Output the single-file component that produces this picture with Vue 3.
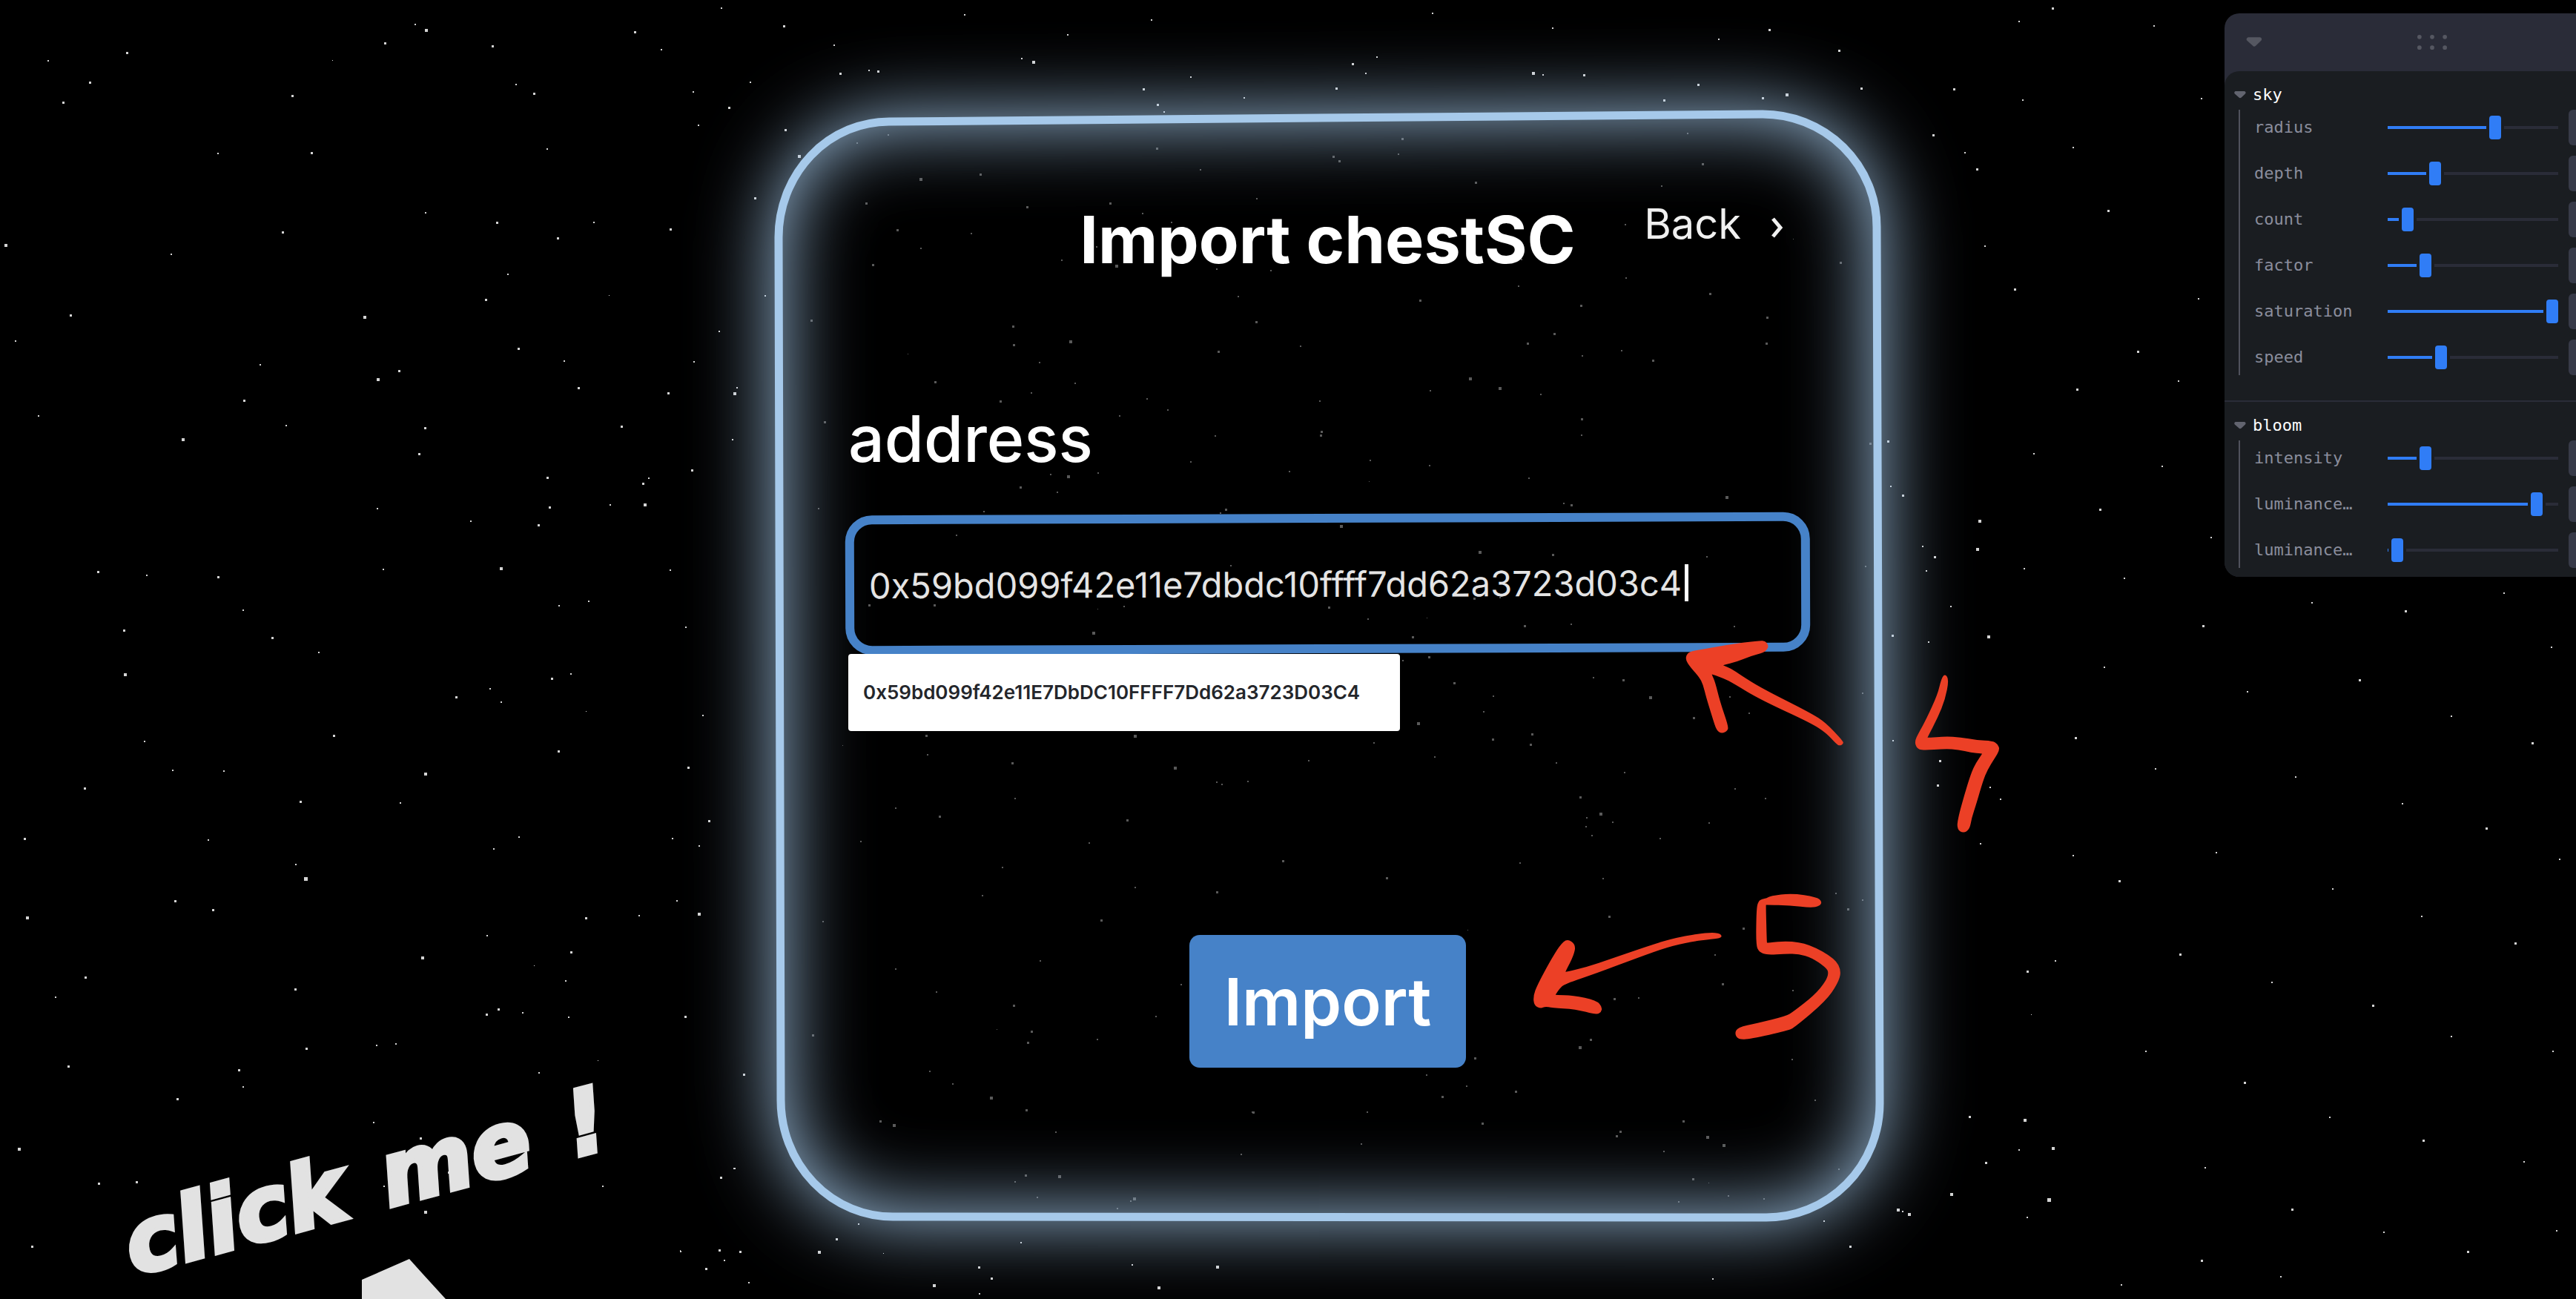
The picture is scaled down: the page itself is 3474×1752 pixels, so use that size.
<script setup>
import { ref, reactive } from 'vue'

const address = ref('0x59bd099f42e11e7dbdc10ffff7dd62a3723d03c4')
const suggestion = '0x59bd099f42e11E7DbDC10FFFF7Dd62a3723D03C4'

const folders = reactive([
  {
    name: 'sky',
    controls: [
      { id: 'radius', label: 'radius', value: 137 },
      { id: 'depth', label: 'depth', value: 56 },
      { id: 'count', label: 'count', value: 19 },
      { id: 'factor', label: 'factor', value: 43 },
      { id: 'saturation', label: 'saturation', value: 214 },
      { id: 'speed', label: 'speed', value: 64 },
    ],
  },
  {
    name: 'bloom',
    controls: [
      { id: 'intensity', label: 'intensity', value: 43 },
      { id: 'luminance-threshold', label: 'luminance…', value: 193 },
      { id: 'luminance-smoothing', label: 'luminance…', value: 5 },
    ],
  },
])

// Star sectors: origin, unit scale and a list of "x y size" in sector units.
const sectors = [
  {
    at: [0, 0], unit: [1.742, 2.24],
    stars: '114 183 2,298 158 3,210 249 3,148 310 3,513 463 2,732 461 3,687 288 3,782 183 1,904 129 3,976 74 2,1000 90 4,1157 140 3,1212 255 2,1255 283 3,1491 97 3,1553 150 2,1286 450 2,1000 643 2,1167 671 3,1395 673 2,1310 718 3,664 702 3,402 768 2,13 740 4,1193 829 2,1141 904 3,1432 894 1,855 957 4,165 953 3,36 1030 2,611 1102 2,887 1145 4,938 1119 3,1218 1053 3,1325 1090 2,1358 1172 3,573 1209 3,90 1256 2,428 1327 4,673 1286 2,999 1292 3,1459 1288 3,984 1370 3,1286 1442 3,1524 1445 2,1511 1461 3,1513 1523 4,1434 1526 2,1290 1532 3,887 1537 2',
  },
  {
    at: [0, 700], unit: [1.568, 1.4905],
    stars: '207 106 3,310 114 2,461 116 3,514 183 2,262 223 3,264 312 4,576 238 3,674 268 2,811 102 2,1058 98 4,995 5 2,1139 12 3,1183 174 2,1245 165 2,1417 103 2,1450 218 2,1167 321 3,1207 312 2,965 358 3,1037 342 2,1060 368 2,1240 387 1,1181 466 3,1487 395 2,1455 500 3,706 435 3,305 447 2,365 506 2,473 507 2,178 541 3,899 511 4,635 568 3,847 571 2,1499 606 3,1422 643 2,1478 658 2,1097 639 2,1045 664 2,51 643 3,440 645 2,625 694 2,645 722 5,370 767 3,450 785 3,56 800 4,1431 767 2,1351 797 2,1238 802 3,1477 793 4,1030 837 2,1208 870 3,892 881 4,1130 899 1,1196 928 2,181 921 3,117 961 2,624 945 3,1054 985 3,1029 996 3,1105 992 2,1202 1001 2,1449 1000 3,837 1055 2,796 1058 2,647 1064 3,1265 1090 1,1140 1114 2,145 1100 3,505 1108 3,514 1142 2,374 1165 3,790 1213 2,889 1245 3,39 1265 4,209 1335 3,288 1332 3,812 1341 2,1274 1341 2,911 1363 2,898 1392 4,949 1313 3,1553 1305 2,1524 1323 3,68 1462 3,1439 1472 2',
  },
  {
    at: [900, 60], unit: [1.823, 2.613],
    stars: '410 2 2,871 49 2,899 61 4,425 103 3,496 92 2,518 93 3,204 132 2,64 168 2,152 221 3,76 286 2,290 300 3,323 392 4,216 540 3,8 651 3,240 885 2,128 1011 2,66 1118 2,171 1211 2,164 1228 4,2 1227 3,160 1392 2,60 1501 3,1287 116 2,1170 156 3,1205 211 3,1221 237 2,1418 189 2',
  },
  {
    at: [1760, 60], unit: [1.823, 2.613],
    stars: '117 68 3,177 45 2,150 101 2,77 153 3,559 99 4,585 107 2,685 106 3,967 142 3,883 195 3,1184 176 4,1124 189 3,1178 243 2,1313 21 3,1367 153 3,1544 320 3,1433 1398 3,1440 1557 2',
  },
  {
    at: [1960, 660], unit: [1.96, 3],
    stars: '1187 24 3,1389 125 4,1241 231 2,1383 240 4,1273 274 3,1251 331 2,1315 474 2,1161 590 3,1413 593 4,1256 619 2,1162 1017 2,1286 1099 3,1279 1197 3,1420 1206 2,1446 1255 2,1394 1434 2',
  },
  {
    at: [900, 1350], unit: [1.823, 3],
    stars: '44 64 2,187 296 3,166 678 2,131 713 3,470 903 2,416 964 3,372 1015 4,128 1008 3,178 1015 3,32 1012 1,140 1050 2,94 1083 3,200 1140 2,532 1022 1,654 1148 4,766 1078 3,797 1123 3,767 1185 2,870 979 2,1143 1068 2,1351 1074 4,1207 1158 4',
  },
  {
    at: [2200, 1300], unit: [2.613, 3],
    stars: '1396 31 3,1410 207 1,1192 618 3,1385 631 4,1483 743 4,1366 753 2,1248 805 3,1125 930 4,1469 951 5,937 994 4,956 1001 2,977 1011 4,803 835 2,680 1041 2,770 1142 3,287 1275 2',
  },
  {
    at: [0, 0], unit: [0.4513, 0.4513],
    stars: '439 5 2,587 9 2,477 16 3,650 21 2,701 12 2,872 8 2,945 17 2,1046 24 2,1077 18 3,1189 54 3,1196 93 2,1203 103 3,1229 13 2,1249 5 3,1311 16 2,1231 61 2,1262 90 2,1340 60 2,1208 150 2,1283 128 3,1226 176 3,1338 182 2,1301 214 3,1326 232 2,1264 237 3,1238 276 2,1316 284 2,1278 310 3,1346 327 2,1232 346 2,1293 352 2,1341 381 3,1407 367 2,1464 372 3,1524 361 2,1553 394 2,1281 406 2,1368 421 2,1436 414 3,1492 436 2,1541 452 3,1263 449 3,1312 468 2,1397 473 2,1462 489 2,1513 504 3,1558 523 2,1262 521 2,1290 536 3,1349 519 2,1420 541 2,1474 558 2,1531 574 3,1327 581 3,1383 598 2,1444 612 3,1492 631 2,1554 640 2,1251 585 2,1306 640 2,1366 659 3,1418 680 2,1475 694 3,1536 707 2,1342 711 2,1395 736 3,1451 750 2,1502 762 3,1556 749 2,1340 767 3,1291 782 2,1234 741 2,1388 777 2',
  },
]

const dimSectors = [
  {
    at: [900, 60], unit: [1.823, 2.613],
    stars: '543 320 2,467 347 2,1204 366 3,1311 442 2,621 474 4,770 458 3,489 558 3,884 571 3,1088 558 3,1169 595 2,566 653 3,748 666 2,1450 544 2,1240 627 2,623 718 2,1055 713 2,505 775 3,969 761 2,1103 779 4,1350 791 2,1484 797 2,1404 888 2,354 971 3,849 993 3,851 1058 3,989 1045 4,1448 976 3,1354 1081 3,593 1093 1,916 1120 2,658 1188 3,1003 1194 2,895 1227 2,819 1257 3,1179 1249 2,1231 1287 2,1112 1309 2,387 1331 3,1348 1379 2,1287 1471 2,985 1520 4,942 1516 2,1059 1510 2,1530 1505 2,868 1559 3,1556 1063 2',
  },
  {
    at: [1760, 60], unit: [1.823, 2.613],
    stars: '239 331 3,229 388 2,70 394 3,83 409 3,420 486 3,941 314 2,978 420 3,877 500 2,787 636 2,1202 686 1,533 757 2,1317 768 3,789 824 2,525 852 2,995 879 3,282 901 3,678 919 3,1135 962 3,612 1020 3,547 1054 3,1133 1053 3,778 1080 2,682 1097 2,855 1113 3,404 1176 4,478 1209 4,308 1220 2,580 1234 2,36 1256 2,680 1319 3,680 1378 2,41 1363 3,38 1376 3,1389 1407 3,160 1466 2,306 1485 2,550 1528 2,159 1541 1',
  },
  {
    at: [1100, 660], unit: [1.823, 3],
    stars: '594 12 2,8 78 2,414 91 2,1008 80 3,996 95 2,346 186 2,1291 148 4,1020 309 2,132 467 3,291 469 3,759 474 2,695 486 1,1261 478 3,1358 524 2,1504 522 1,682 580 4,1468 597 3,1507 679 3,1444 693 2,1480 944 4,271 997 3,784 996 4,1372 1026 2,275 1074 2,1522 1084 2,484 1107 3,1213 1098 2,882 1126 4,68 1039 1,987 1184 2,1063 1181 2,999 1194 2',
  },
  {
    at: [1960, 660], unit: [1.96, 3],
    stars: '722 30 4,292 57 2,312 64 3,69 252 4,262 265 3,671 272 2,1089 311 2,55 442 3,124 437 2,189 553 3,311 546 2,743 555 2,2 784 3,105 837 2,449 772 3,370 762 2,520 841 4,731 839 2,80 900 2,636 925 3,782 906 2,1081 825 2,208 991 3,103 1010 3,203 1033 3,272 1107 2,453 1145 2,745 1211 2,335 1246 3,825 1251 2,388 1310 4,352 1330 2,351 1364 2,421 1348 2,677 1350 2,366 1401 2,546 1413 2',
  },
  {
    at: [1560, 1160], unit: [1.568, 3],
    stars: '267 3 3,769 11 2,486 71 3,944 76 2,127 129 3,957 228 3,658 285 1,1241 275 3,1180 385 2,1197 502 3,51 503 2,968 561 3,1019 558 2,1345 527 2,917 727 3,893 757 4,673 801 3,1343 807 2,571 871 2,655 916 2,759 935 3,603 956 3,203 1021 2,446 1020 2,1392 971 2,1114 1055 3,689 1064 3,980 1098 3,972 1116 3,1164 1120 4,1198 1152 4,432 1149 2,1072 1179 2,1437 135 2,1492 161 2,1461 198 3',
  },
  {
    at: [900, 1350], unit: [1.823, 3],
    stars: '852 17 3,811 118 1,896 122 3,886 168 3,1057 156 2,1201 63 2,358 137 3,646 285 2,701 336 2,794 390 4,883 441 3,524 485 3,556 502 4,955 531 2,1440 451 3,1411 621 2,881 705 3,963 707 4,855 732 2,909 795 2,1146 797 4,1139 809 2,1107 840 2',
  },
  {
    at: [2200, 1300], unit: [2.613, 3],
    stars: '184 635 3,268 700 3,324 732 3,115 759 2,216 870 3,275 888 1,342 939 2,167 962 2,467 951 2,648 551 2,567 387 2,732 831 2',
  },
  {
    at: [0, 0], unit: [0.4513, 0.4513],
    stars: '545 492 2,572 497 3,663 513 2,610 528 2,598 545 2,670 560 3,524 512 2,501 561 2,545 590 2,633 585 2,691 540 2,570 604 2,618 486 2,686 499 3',
  },
]

function starDots(list) {
  return list.flatMap(({ at, unit, stars }) =>
    stars.split(',').map((star) => {
      const [x, y, size] = star.split(' ').map(Number)
      return { x: Math.round(at[0] + x / unit[0]), y: Math.round(at[1] + y / unit[1]), size }
    }),
  )
}

const brightStars = starDots(sectors)
const dimStars = starDots(dimSectors)

// Turns a pen outline into a closed curve that runs through the segment midpoints.
function inkPath(points, at, unit) {
  const p = points.split(' ').map((pair) => {
    const [x, y] = pair.split(',').map(Number)
    return [at[0] + x / unit[0], at[1] + y / unit[1]]
  })
  const mid = (a, b) => [(a[0] + b[0]) / 2, (a[1] + b[1]) / 2].map((n) => n.toFixed(1)).join(' ')
  const start = mid(p[p.length - 1], p[0])
  const body = p.map((pt, i) => `Q${pt.map((n) => n.toFixed(1)).join(' ')} ${mid(pt, p[(i + 1) % p.length])}`)
  return `M${start}${body.join('')}Z`
}

const ink = [
  inkPath('640,652 720,630 810,611 825,614 832,630 832,642 822,660 785,675 750,697 713,711 714,713 735,725 760,752 815,805 945,905 985,945 1030,1018 1031,1030 1021,1038 1012,1030 985,985 945,945 810,850 740,785 715,765 684,748 683,749 692,780 705,860 727,958 725,977 710,988 696,977 685,925 668,840 660,790 650,760 625,717 614,690 616,670 624,657', [1960, 660], [1.96, 3]),
  inkPath('1300,746 1310,770 1300,850 1280,925 1253,1004 1254,1005 1300,1000 1340,1003 1385,1015 1425,1018 1438,1030 1445,1053 1430,1090 1412,1135 1400,1180 1383,1270 1370,1330 1365,1375 1348,1392 1331,1375 1334,1330 1350,1240 1368,1150 1382,1105 1398,1070 1397,1069 1368,1065 1335,1053 1300,1050 1240,1056 1225,1048 1219,1020 1230,985 1250,930 1280,830 1290,765', [1960, 660], [1.96, 3]),
  inkPath('868,318 886,342 882,385 864,452 865,453 910,432 960,400 1040,347 1100,312 1168,292 1193,297 1195,315 1175,320 1130,330 1080,352 1020,393 930,458 862,502 852,520 843,545 844,546 880,547 930,568 942,595 940,615 930,626 885,603 835,598 822,592 812,601 798,588 796,550 805,505 830,415 852,345', [1560, 1160], [1.568, 3]),
  inkPath('1290,155 1297,145 1343,134 1395,149 1407,168 1402,186 1383,193 1340,183 1289,181 1288,182 1290,334 1291,335 1335,327 1380,340 1435,400 1448,450 1440,500 1415,570 1350,675 1335,690 1255,724 1230,726 1222,703 1228,677 1270,660 1330,632 1345,615 1390,548 1415,490 1421,455 1415,435 1385,395 1358,380 1330,379 1290,384 1274,372 1267,345 1268,200 1272,167 1280,157', [1560, 1160], [1.568, 3]),
]

const framePath =
  'M1199 164L2377 154A154 152 0 0 1 2531 306L2535 1488A153 154 0 0 1 2382 1642L1204 1641A151 157 0 0 1 1053 1484L1050 320A149 156 0 0 1 1199 164Z'
</script>

<template>
  <main class="scene">
    <svg class="sky" viewBox="0 0 3474 1752" preserveAspectRatio="xMidYMid slice" aria-hidden="true">
      <rect v-for="(s, i) in brightStars" :key="i" :x="s.x - 1" :y="s.y - 1" :width="s.size" :height="s.size" />
      <g opacity="0.42">
        <rect v-for="(s, i) in dimStars" :key="i" :x="s.x - 1" :y="s.y - 1" :width="s.size" :height="s.size" />
      </g>
      <path class="pointer" d="M488 1726L552 1698L570 1718L601 1752H488Z" />
    </svg>

    <p class="hint"><span>click</span><span>me</span><span>!</span></p>

    <form class="card" @submit.prevent>
      <svg class="frame" viewBox="1044 148 1497 1500" preserveAspectRatio="none" aria-hidden="true">
        <defs>
          <filter id="glow" filterUnits="userSpaceOnUse" x="644" y="-252" width="2297" height="2300">
            <feGaussianBlur stdDeviation="56" />
          </filter>
          <clipPath id="outside">
            <path :d="'M644 -252H2941V2048H644Z' + framePath" clip-rule="evenodd" />
          </clipPath>
          <clipPath id="inside"><path :d="framePath" /></clipPath>
        </defs>
        <g class="halo" clip-path="url(#outside)">
          <path :d="framePath" filter="url(#glow)" />
        </g>
        <g class="halo" clip-path="url(#inside)">
          <path :d="'M644 -252H2941V2048H644Z' + framePath" fill-rule="evenodd" filter="url(#glow)" />
        </g>
        <path class="edge" :d="framePath" />
      </svg>

      <header class="card-head">
        <h1>Import chestSC</h1>
        <button class="back" type="button">
          Back
          <svg viewBox="0 0 17 30" width="17" height="30" aria-hidden="true"><path d="M3 3L13 15L3 27" /></svg>
        </button>
      </header>

      <label class="field-label" for="address">address</label>
      <div class="field">
        <input id="address" v-model="address" type="text" autocomplete="off" spellcheck="false" />
        <span class="caret" aria-hidden="true"></span>
        <button class="suggestion" type="button" @click="address = suggestion">{{ suggestion }}</button>
      </div>

      <button class="submit" type="submit">Import</button>
    </form>

    <aside class="panel">
      <div class="panel-bar">
        <svg class="panel-caret" viewBox="0 0 9 5" width="24" height="14" aria-hidden="true">
          <path d="M3.8 4.4c.4.3 1 .3 1.4 0L8 1.7A1 1 0 007.4 0H1.6a1 1 0 00-.7 1.7l3 2.7z" />
        </svg>
        <svg viewBox="0 0 28 14" width="40" height="20" aria-hidden="true">
          <circle cx="2" cy="2" r="2" /><circle cx="14" cy="2" r="2" /><circle cx="26" cy="2" r="2" />
          <circle cx="2" cy="12" r="2" /><circle cx="14" cy="12" r="2" /><circle cx="26" cy="12" r="2" />
        </svg>
      </div>
      <div class="panel-body">
        <section v-for="folder in folders" :key="folder.name" class="folder">
          <h2>
            <svg viewBox="0 0 9 5" width="18" height="10" aria-hidden="true">
              <path d="M3.8 4.4c.4.3 1 .3 1.4 0L8 1.7A1 1 0 007.4 0H1.6a1 1 0 00-.7 1.7l3 2.7z" />
            </svg>
            {{ folder.name }}
          </h2>
          <div class="controls">
            <div v-for="c in folder.controls" :key="c.id" class="control">
              <label :for="c.id">{{ c.label }}</label>
              <input
                :id="c.id"
                v-model.number="c.value"
                class="slider"
                type="range"
                min="0"
                max="214"
                :style="{ '--at': c.value + 'px' }"
              />
              <span class="readout"></span>
            </div>
          </div>
        </section>
      </div>
    </aside>

    <svg class="ink" viewBox="0 0 3474 1752" preserveAspectRatio="xMidYMid slice" aria-hidden="true">
      <path v-for="(d, i) in ink" :key="i" :d="d" />
    </svg>
  </main>
</template>

<style>
body {
  margin: 0;
  background: #000;
}
</style>

<style scoped>
.scene {
  position: relative;
  display: grid;
  grid-template-columns: 1044fr 1497fr 933fr;
  align-items: start;
  min-height: 100vh;
  overflow: hidden;
  background: #000;
  color: #fff;
  font-family: Inter, 'Liberation Sans', sans-serif;
}

.sky,
.ink {
  position: absolute;
  inset: 0;
  width: 100%;
  height: 100%;
  pointer-events: none;
}

.sky {
  fill: #d4d4d4;
}

.pointer {
  fill: #e2e2e2;
}

.ink {
  fill: #ec4026;
}

.hint {
  position: absolute;
  left: 188px;
  bottom: 4px;
  display: flex;
  gap: 52px;
  margin: 0;
  color: #e2e2e2;
  font: italic bold 120px/140px 'DejaVu Sans', sans-serif;
  -webkit-text-stroke: 6px #e2e2e2;
  transform: rotate(-15deg);
  transform-origin: 0 100%;
}

.card {
  position: relative;
  grid-column: 2;
  box-sizing: border-box;
  display: flex;
  flex-direction: column;
  margin-top: 148px;
  padding: 122px 100px 208px 96px;
}

.frame {
  position: absolute;
  inset: 0;
  width: 100%;
  height: 100%;
  overflow: visible;
  pointer-events: none;
}

.halo {
  fill: #a6c9ea;
}

.edge {
  fill: none;
  stroke: #a6c9ea;
  stroke-width: 11;
}

.card-head {
  position: relative;
  display: grid;
  grid-template-columns: 1fr auto 1fr;
  align-items: start;
}

h1 {
  grid-column: 2;
  margin: 0;
  font-size: 88px;
  line-height: 106px;
  font-weight: 700;
}

.back {
  justify-self: end;
  display: flex;
  align-items: center;
  gap: 40px;
  margin-right: 36px;
  padding: 0;
  border: 0;
  background: none;
  color: #f0f0f0;
  font: 400 56px/64px Inter, 'Liberation Sans', sans-serif;
}

.back svg {
  margin-top: 10px;
  fill: none;
  stroke: #f0f0f0;
  stroke-width: 5;
}

.field-label {
  position: relative;
  margin: 163px 0 48px;
  padding-left: 4px;
  font-size: 86px;
  line-height: 106px;
  font-weight: 500;
}

.field {
  position: relative;
}

.field input {
  display: block;
  box-sizing: border-box;
  width: 100%;
  height: 188px;
  padding: 0 20px;
  border: 12px solid #4682c8;
  border-radius: 36px;
  outline: 0;
  background: none;
  color: #e4e4e4;
  font: 400 47px/56px Inter, 'Liberation Sans', sans-serif;
  transform: rotate(-0.2deg);
}

.caret {
  position: absolute;
  top: 68px;
  left: 1132px;
  width: 5px;
  height: 50px;
  background: #fff;
}

.suggestion {
  position: absolute;
  top: 189px;
  left: 4px;
  width: 744px;
  height: 104px;
  padding: 0 20px;
  border: 0;
  border-radius: 4px;
  background: #fff;
  color: #24262b;
  font: 600 26px/32px Inter, 'Liberation Sans', sans-serif;
  text-align: left;
}

.submit {
  position: relative;
  align-self: center;
  width: 373px;
  height: 179px;
  margin-top: 380px;
  padding: 0;
  border: 0;
  border-radius: 14px;
  background: #4682c8;
  color: #fff;
  font: 600 88px/106px Inter, 'Liberation Sans', sans-serif;
}

.panel {
  position: relative;
  grid-column: 3;
  justify-self: end;
  width: 560px;
  margin: 18px -86px 0 0;
  border-radius: 20px;
  background: #2a2c38;
  font-family: 'DejaVu Sans Mono', monospace;
  font-size: 22px;
  line-height: 28px;
}

.panel-bar {
  display: grid;
  grid-template-columns: 1fr auto 1fr;
  align-items: center;
  height: 78px;
  padding: 0 28px;
  fill: #555761;
}

.panel-body {
  overflow: hidden;
  padding-bottom: 12px;
  border-radius: 20px;
  background: #1a1d21;
}

.folder + .folder {
  margin-top: 34px;
  border-top: 2px solid #2a2c38;
}

h2 {
  display: flex;
  align-items: center;
  gap: 8px;
  height: 52px;
  margin: 0;
  padding: 12px 12px 0;
  box-sizing: border-box;
  color: #fefefe;
  font-size: 22px;
  font-weight: 400;
}

h2 svg {
  fill: #62646f;
}

.controls {
  display: flex;
  flex-direction: column;
  gap: 14px;
  margin-left: 19px;
  padding: 0 20px 0 19px;
  border-left: 2px solid #50525c;
}

.control {
  display: grid;
  grid-template-columns: 166px 230px 1fr;
  column-gap: 14px;
  align-items: center;
  height: 48px;
  color: #8a8d9c;
}

.slider {
  --gap: #1a1d21;
  appearance: none;
  width: 230px;
  height: 32px;
  margin: 0;
  border-radius: 2px;
  background: linear-gradient(
      to right,
      #307df6 calc(var(--at) - 4px),
      var(--gap) calc(var(--at) - 4px) calc(var(--at) + 20px),
      #2a2c38 calc(var(--at) + 20px)
    )
    center / 100% 4px no-repeat;
}

.slider::-webkit-slider-thumb {
  appearance: none;
  width: 16px;
  height: 32px;
  border-radius: 4px;
  background: #307df6;
}

.readout {
  height: 48px;
  border-radius: 6px;
  background: #373a48;
}
</style>
